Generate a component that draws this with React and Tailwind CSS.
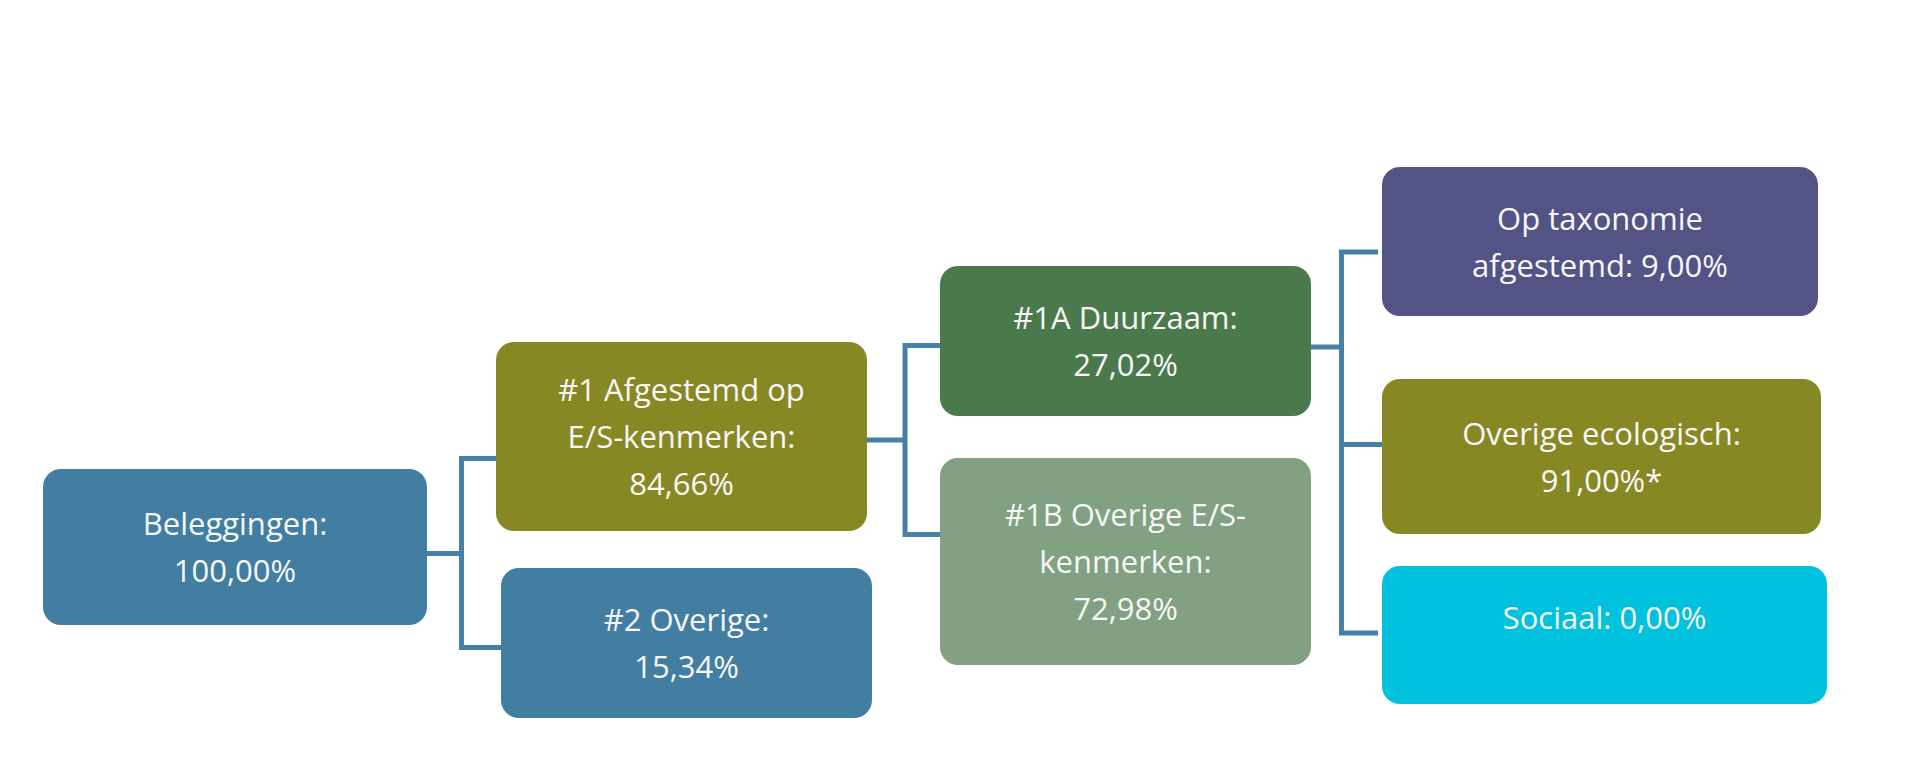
import React from "react";

const Box = ({ className = "", lines }) => (
  <div
    className={`flex flex-col items-center justify-center rounded-[18px] text-center text-[31px] leading-[47px] text-[#f7f7f7] ${className}`}
  >
    {lines.map((l, i) => (
      <div key={i} className="whitespace-nowrap">
        {l}
      </div>
    ))}
  </div>
);

const Connector = ({ width, children }) => (
  <svg
    className="shrink-0 overflow-visible"
    width={width}
    height="761"
    viewBox={`0 0 ${width} 761`}
    fill="none"
  >
    <g stroke="#4580a6" strokeWidth="5" strokeLinejoin="miter">
      {children}
    </g>
  </svg>
);

export default function App() {
  return (
    <div
      className="flex h-[761px] w-[1920px] items-start overflow-hidden bg-white pl-[43px]"
      style={{ fontFamily: '"Open Sans", "Liberation Sans", sans-serif' }}
    >
      {/* column 1 */}
      <div className="flex w-[384px] shrink-0 flex-col pt-[469px]">
        <Box className="h-[156px] bg-[#417ea1]" lines={["Beleggingen:", "100,00%"]} />
      </div>

      {/* connector 1: x 427 -> 496 */}
      <Connector width={69}>
        <path d="M0 553.5 H34.5" />
        <path d="M69 458.5 H34.5 V647.5 H74" />
      </Connector>

      {/* column 2 */}
      <div className="flex w-[376px] shrink-0 flex-col gap-[37px] pt-[342px]">
        <Box
          className="h-[189px] w-[371px] bg-[#878824]"
          lines={["#1 Afgestemd op", "E/S-kenmerken:", "84,66%"]}
        />
        <Box className="ml-[5px] h-[150px] w-[371px] bg-[#417ea1]" lines={["#2 Overige:", "15,34%"]} />
      </div>

      {/* connector 2: x 872 -> 940 */}
      <Connector width={68}>
        <path d="M-5 440 H33" />
        <path d="M68 345.5 H33 V534.5 H68" />
      </Connector>

      {/* column 3 */}
      <div className="flex w-[371px] shrink-0 flex-col gap-[42px] pt-[266px]">
        <Box className="h-[150px] bg-[#4a7a4b]" lines={["#1A Duurzaam:", "27,02%"]} />
        <Box
          className="h-[207px] bg-[#82a182]"
          lines={["#1B Overige E/S-", "kenmerken:", "72,98%"]}
        />
      </div>

      {/* connector 3: x 1311 -> 1382 */}
      <Connector width={71}>
        <path d="M0 347 H30.5" />
        <path d="M67 252 H30.5 V633 H67" />
        <path d="M30.5 444.5 H71" />
      </Connector>

      {/* column 4 */}
      <div className="flex w-[445px] shrink-0 flex-col items-start pt-[167px]">
        <Box className="h-[149px] w-[436px] bg-[#535386]" lines={["Op taxonomie", "afgestemd: 9,00%"]} />
        <Box
          className="mt-[63px] h-[155px] w-[439px] bg-[#878824]"
          lines={["Overige ecologisch:", "91,00%*"]}
        />
        <Box className="mt-[32px] h-[138px] w-[445px] bg-[#00c1de] pb-[36px]" lines={["Sociaal: 0,00%"]} />
      </div>
    </div>
  );
}
